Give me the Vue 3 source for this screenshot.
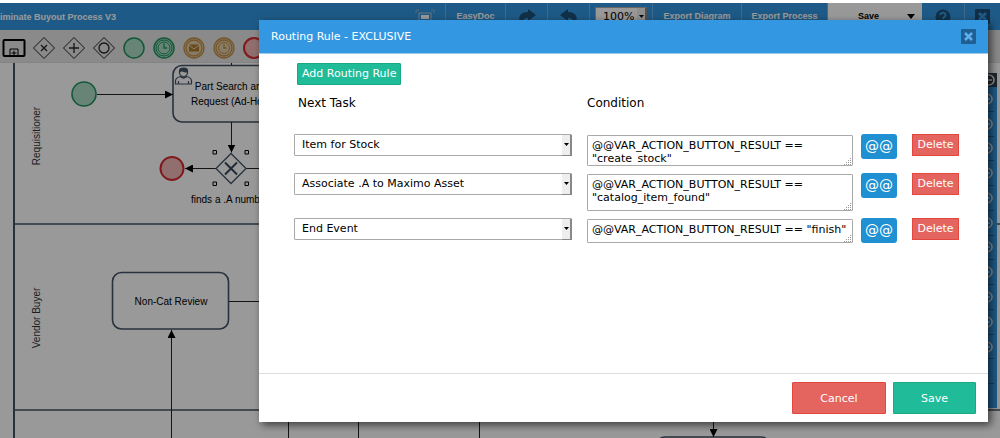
<script setup>
import { ref } from 'vue'

const tasks = ['Item for Stock', 'Associate .A to Maximo Asset', 'End Event']
const rules = ref([
  { id: 1, task: tasks[0], condition: '@@VAR_ACTION_BUTTON_RESULT == "create_stock"', size: 'short' },
  { id: 2, task: tasks[1], condition: '@@VAR_ACTION_BUTTON_RESULT == "catalog_item_found"', size: 'tall' },
  { id: 3, task: tasks[2], condition: '@@VAR_ACTION_BUTTON_RESULT == "finish"', size: 'single' },
])
const zoom = ref('100%')
const shapes = ['Sub process', 'Exclusive gateway', 'Parallel gateway', 'Inclusive gateway', 'Start event', 'Start timer event', 'Intermediate message event', 'Intermediate timer event', 'End event']
</script>

<template>
  <div class="page">
    <div class="designer">
      <header class="topbar">
        <h1 class="process-name">iminate Buyout Process V3</h1>
        <button class="cell fullscreen" type="button" aria-label="Full screen">
          <svg width="20" height="16" viewBox="0 0 20 16" fill="none">
            <path d="M1 4V1H4M16 1H19V4M1 12V15H4M16 15H19V12" stroke="#8fb0cb" />
            <rect x="4" y="4" width="12" height="8" stroke="#b5c9da" />
            <rect x="6" y="6" width="8" height="4" fill="#fff" />
          </svg>
        </button>
        <button class="cell easydoc" type="button">EasyDoc</button>
        <button class="cell arrow" type="button" aria-label="Redo">
          <svg width="18" height="16" viewBox="0 0 18 16"><path d="M10 0L18 6L10 12V9C6 9 4 11 5 16C-1 12 0 3 10 3Z" fill="#1d5078" /></svg>
        </button>
        <button class="cell arrow" type="button" aria-label="Undo">
          <svg width="18" height="16" viewBox="0 0 18 16"><path d="M8 0L0 6L8 12V9C12 9 14 11 13 16C19 12 18 3 8 3Z" fill="#1d5078" /></svg>
        </button>
        <div class="cell zoom-cell">
          <span class="select-box">
            <select v-model="zoom" aria-label="Zoom"><option>100%</option></select>
            <span class="select-arrow"><svg width="5" height="4" viewBox="0 0 5 4"><path d="M0 0H5L2.500 3Z" fill="#000" /></svg></span>
          </span>
        </div>
        <button class="cell diagram-export" type="button">Export Diagram</button>
        <button class="cell process-export" type="button">Export Process</button>
        <button class="save-menu" type="button">
          <span>Save</span>
          <svg width="8" height="5" viewBox="0 0 8 5"><path d="M0 0H8L4 5Z" fill="#000" /></svg>
        </button>
        <button class="cell help" type="button" aria-label="Help">
          <svg width="16" height="16" viewBox="0 0 16 16">
            <circle cx="8" cy="8" r="7.500" fill="#1d5078" />
            <path d="M5.500 6C5.500 3 10.500 3 10.500 6C10.500 8 8 8 8 10M8 11V13" fill="none" stroke="#3397e2" stroke-width="2" />
          </svg>
        </button>
        <button class="cell close-cell" type="button" aria-label="Close designer">
          <svg width="15" height="15" viewBox="0 0 15 15">
            <rect width="15" height="15" rx="1" fill="#1d5078" />
            <path d="M4 4L11 11M11 4L4 11" stroke="#3397e2" stroke-width="3" />
          </svg>
        </button>
      </header>

      <nav class="shapes" aria-label="Shapes">
        <button v-for="(name, i) in shapes" :key="name" type="button" class="shape" :aria-label="name">
          <svg width="24" height="24" viewBox="0 0 24 24" fill="none">
            <template v-if="i === 0">
              <rect x="1.500" y="4" width="21" height="16" rx="1" stroke="#000" stroke-width="2" />
              <path d="M8 20V13H16V20M12 14.500V19M9.500 17H14.500" stroke="#000" />
            </template>
            <template v-else-if="i < 4">
              <path d="M12 1.500L22.500 12L12 22.500L1.500 12Z" stroke="#222" />
              <path v-if="i === 1" d="M9 9L15 15M15 9L9 15" stroke="#222" stroke-width="1.300" />
              <path v-if="i === 2" d="M12 7V17M7 12H17" stroke="#222" stroke-width="1.300" />
              <circle v-if="i === 3" cx="12" cy="12" r="5" stroke="#222" stroke-width="1.300" />
            </template>
            <template v-else-if="i < 6">
              <circle cx="12" cy="12" r="10" fill="#aedcc6" stroke="#219560" stroke-width="1.500" />
              <g v-if="i === 5" stroke="#219560">
                <circle cx="12" cy="12" r="8" /><circle cx="12" cy="12" r="6" />
                <path d="M12 7.500V12H15" stroke-width="1.300" />
              </g>
            </template>
            <template v-else-if="i < 8">
              <circle cx="12" cy="12" r="10" fill="#e3cfae" stroke="#c09045" stroke-width="1.300" />
              <circle cx="12" cy="12" r="8" stroke="#c09045" stroke-width="1.300" />
              <template v-if="i === 6">
                <rect x="7" y="8.500" width="10" height="7" fill="#b07a28" />
                <path d="M7 9L12 13L17 9" stroke="#ead9be" />
              </template>
              <g v-else stroke="#c09045"><circle cx="12" cy="12" r="5.500" /><path d="M12 8V12H14.500" stroke-width="1.300" /></g>
            </template>
            <circle v-else cx="12" cy="12" r="10" fill="#f2b9b9" stroke="#d62a30" stroke-width="2" />
          </svg>
        </button>
      </nav>

      <main class="canvas">
        <svg class="diagram" width="1000" height="375" viewBox="0 63 1000 375" fill="none">
          <defs>
            <marker id="tip" viewBox="0 0 8 8" refX="8" refY="4" markerWidth="8" markerHeight="8" markerUnits="userSpaceOnUse" orient="auto">
              <path d="M0 0L8 4L0 8Z" fill="#000" />
            </marker>
          </defs>
          <g stroke="#445366" stroke-width="1.600">
            <path d="M14 63V438" stroke-width="2" />
            <path d="M14 224H1000M14 410H1000" />
            <rect x="173" y="65.500" width="117" height="56.500" rx="9" />
            <rect x="112.500" y="272.500" width="116" height="56.500" rx="9" />
            <rect x="656" y="437" width="114" height="57" rx="9" />
          </g>
          <g stroke="#222">
            <path d="M97 94.500H173" marker-end="url(#tip)" />
            <path d="M231.500 63V65" />
            <path d="M231.500 122V152.500" marker-end="url(#tip)" />
            <path d="M216 168.500H185" marker-end="url(#tip)" />
            <path d="M246 168.500H300M229 301.500H300" />
            <path d="M171.500 438V330" marker-end="url(#tip)" />
            <path d="M288.500 400V438M358.500 400V438M479.500 400V438" />
            <path d="M713.500 400V437" marker-end="url(#tip)" />
          </g>
          <circle cx="84" cy="94" r="12" fill="#aedcc6" stroke="#219560" stroke-width="1.600" />
          <circle cx="172" cy="168.500" r="11.500" fill="#f2b9b9" stroke="#d62a30" stroke-width="2" />
          <path d="M231 153.500L246 168.500L231 183.500L216 168.500Z" stroke="#445366" stroke-width="1.300" />
          <path d="M225 162.500L237 174.500M237 162.500L225 174.500" stroke="#34475b" stroke-width="2" />
          <path d="M213 150.500H216.500V154H213ZM245 150.500H248.500V154H245ZM213 182H216.500V185.500H213ZM245 182H248.500V185.500H245Z" stroke="#000" />
          <g stroke="#445366" stroke-width="1.200">
            <path d="M175.500 84V80.500Q176 77.500 180.500 76.500Q183.500 79.500 186.500 76.500Q191 77.500 191.500 80.500V84ZM178.500 84V81M188.500 84V81" />
            <circle cx="183.500" cy="72.500" r="4" />
            <path d="M179.500 72Q179 68 183.500 68Q188 68 187.500 72Q183 72 182 70.500Z" fill="#445366" />
          </g>
          <g class="label" text-anchor="middle">
            <text x="231" y="90">Part Search and</text>
            <text x="231" y="105">Request (Ad-Hoc)</text>
            <text x="171" y="305">Non-Cat Review</text>
          </g>
          <text class="label" x="191" y="203">finds a .A number</text>
          <text class="lane" text-anchor="middle" transform="translate(40 136) rotate(-90)">Requisitioner</text>
          <text class="lane" text-anchor="middle" transform="translate(40 318) rotate(-90)">Vendor Buyer</text>
        </svg>
        <aside class="side-panel">
          <div class="side-head"><svg width="12" height="12" viewBox="0 0 12 12" fill="none" stroke="#fff" stroke-width="1.500"><circle cx="6" cy="6" r="5" /><path d="M3 6H9" /></svg></div>
          <div v-for="n in 13" :key="n" class="side-item">
            <svg v-if="n < 12" width="12" height="12" viewBox="0 0 12 12" fill="none" stroke="#eee" stroke-width="1.500"><circle cx="6" cy="6" r="5" /><path d="M3 6H9M6 3V9" /></svg>
          </div>
        </aside>
      </main>

      <div class="backdrop">
        <section class="dialog" role="dialog" aria-labelledby="dialog-title">
          <header class="dialog-head">
            <h2 id="dialog-title">Routing Rule - EXCLUSIVE</h2>
            <button class="dialog-close" type="button" aria-label="Close">
              <svg width="15" height="15" viewBox="0 0 15 15">
                <rect width="15" height="15" rx="1" fill="#1f5f94" />
                <path d="M4 4L11 11M11 4L4 11" stroke="#5db0ef" stroke-width="2.500" />
              </svg>
            </button>
          </header>
          <div class="dialog-body">
            <button class="add" type="button">Add Routing Rule</button>
            <div class="rule-grid headings">
              <span id="task-heading">Next Task</span>
              <span id="condition-heading" class="condition-heading">Condition</span>
            </div>
            <div class="rules">
              <div v-for="rule in rules" :key="rule.id" class="rule-grid">
                <span class="select-box task">
                  <select v-model="rule.task" aria-labelledby="task-heading">
                    <option v-for="task in tasks" :key="task">{{ task }}</option>
                  </select>
                  <span class="select-arrow"><svg width="5" height="4" viewBox="0 0 5 4"><path d="M0 0H5L2.500 3Z" fill="#000" /></svg></span>
                </span>
                <div class="condition" :class="rule.size">
                  <textarea v-model="rule.condition" aria-labelledby="condition-heading" spellcheck="false"></textarea>
                  <svg class="grip" width="8" height="8" viewBox="0 0 8 8" stroke="#999" stroke-dasharray="1 1">
                    <path d="M6 1.500H8M4 3.500H8M2 5.500H8M0 7.500H8" />
                  </svg>
                </div>
                <button class="variable" type="button">@@</button>
                <button class="delete" type="button">Delete</button>
              </div>
            </div>
          </div>
          <footer class="dialog-foot">
            <button class="cancel" type="button">Cancel</button>
            <button class="save" type="button">Save</button>
          </footer>
        </section>
      </div>
    </div>
  </div>
</template>

<style>
body {
  margin: 0;
  background: #fff;
}
</style>

<style scoped>
* {
  box-sizing: border-box;
}
.page {
  padding-top: 3px;
  font-family: "DejaVu Sans", sans-serif;
}
button {
  margin: 0;
  padding: 0;
  border: 0;
  background: none;
  font: inherit;
  color: inherit;
  cursor: pointer;
}
svg {
  display: block;
}
.designer {
  position: relative;
  overflow: hidden;
  display: flex;
  flex-direction: column;
  min-height: calc(100vh - 3px);
  background: #fff;
}
.topbar {
  display: flex;
  height: 27px;
  background: #3397e2;
  color: #fff;
  font: bold 9px/27px "Liberation Sans", sans-serif;
}
.process-name {
  flex: 1;
  margin: 0;
  font-size: 9px;
  line-height: 29px;
  white-space: nowrap;
}
.cell {
  display: flex;
  align-items: center;
  justify-content: center;
  border-right: 1px solid #6ab2ea;
}
.cell,
.save-menu {
  flex: none;
  line-height: 29px;
}
.fullscreen {
  width: 41px;
}
.easydoc {
  width: 60px;
}
.arrow {
  width: 42px;
}
.zoom-cell {
  width: 63px;
}
.diagram-export {
  width: 89px;
}
.process-export {
  width: 86px;
}
.save-menu {
  display: flex;
  align-items: center;
  justify-content: space-between;
  width: 94px;
  padding: 0 7px 0 30px;
  background: #fff;
  color: #000;
}
.help {
  width: 43px;
}
.close-cell {
  width: 35px;
  border: 0;
}
.shapes {
  display: flex;
  align-items: center;
  gap: 6px;
  height: 33px;
  padding: 3px 0 0 2px;
  background: #e6e6e6;
  border-bottom: 1px solid #ddd;
}
.shape {
  flex: none;
  width: 24px;
}
.canvas {
  position: relative;
  flex: 1;
}
.label {
  fill: #000;
  font: 10px "Liberation Sans", sans-serif;
}
.lane {
  fill: #333;
  font: 10px "Liberation Sans", sans-serif;
}
.side-panel {
  position: absolute;
  top: 10px;
  right: 3px;
  display: flex;
  flex-direction: column;
  width: 120px;
  height: 335px;
  padding: 0 3px;
  background: #3397e2;
}
.side-head {
  display: flex;
  align-items: center;
  justify-content: flex-end;
  height: 14px;
  margin: 0 -3px;
  padding-right: 2px;
  background: #35404e;
}
.side-item {
  display: flex;
  flex: 1;
  align-items: center;
  justify-content: flex-end;
  padding-right: 1px;
  border-bottom: 1px solid #26689b;
}
.side-item:last-child {
  border: 0;
}
.backdrop {
  position: absolute;
  inset: 0;
  padding: 17px 12px 16px 259px;
  background: rgba(0, 0, 0, 0.4);
}
.dialog {
  display: flex;
  flex-direction: column;
  background: #fff;
  box-shadow: 3px 3px 8px rgba(0, 0, 0, 0.6);
}
.dialog-head {
  display: flex;
  align-items: center;
  justify-content: space-between;
  height: 34px;
  padding: 0 12px;
  background: #3397e2;
  border-bottom: 1px solid #9dcbee;
  color: #fff;
}
.dialog-head h2 {
  margin: 0;
  font-size: 11px;
  font-weight: normal;
}
.dialog-body {
  min-height: 319px;
  padding: 8px 29px 0 35px;
}
.add {
  height: 22px;
  margin-left: 3px;
  padding: 0 4px;
  border: 1px solid #1aa883;
  border-radius: 1px;
  background: #20bc99;
  color: #fff;
  font-size: 11px;
}
.rule-grid {
  display: grid;
  grid-template-columns: 278fr 15px 266fr 8px 36px 15px 47px;
  align-items: start;
}
.headings {
  padding-top: 9px;
  font-size: 12px;
  line-height: 18px;
  color: #000;
}
.headings span:first-child {
  padding-left: 4px;
}
.condition-heading {
  grid-column: 3;
}
.rules {
  display: flex;
  flex-direction: column;
  gap: 7px;
  padding-top: 22px;
}
.select-box {
  position: relative;
  display: block;
}
.select-box select {
  appearance: none;
  display: block;
  width: 100%;
  height: 22px;
  margin: 0;
  padding: 0 7px;
  border: 1px solid #aaa;
  border-radius: 1px;
  background: #fff;
  color: #000;
  font: 11px "DejaVu Sans", sans-serif;
}
.zoom-cell .select-box {
  width: 52px;
}
.zoom-cell select {
  height: 20px;
}
.select-arrow {
  position: absolute;
  top: 1px;
  right: 0;
  bottom: 0;
  display: flex;
  align-items: center;
  justify-content: center;
  width: 10px;
  background: #eee;
  border-right: 2px solid #888;
  border-bottom: 1px solid #888;
  pointer-events: none;
}
.condition {
  position: relative;
  grid-column: 3;
  margin-top: 1px;
  padding: 3px 0 1px;
  border: 1px solid #aaa;
  border-radius: 1px;
  background: #fff;
}
.short {
  height: 31px;
}
.tall {
  height: 37px;
}
.single {
  height: 24px;
}
.condition textarea {
  display: block;
  width: 100%;
  height: 100%;
  padding: 0 0 0 4px;
  border: 0;
  outline: 0;
  background: transparent;
  color: #000;
  font: 11px/13px "DejaVu Sans", sans-serif;
  resize: none;
  overflow: hidden;
}
.grip {
  position: absolute;
  right: 0;
  bottom: 0;
}
.variable {
  grid-column: 5;
  height: 25px;
  border-radius: 3px;
  background: #1f90d2;
  color: #fff;
  font-size: 14px;
  line-height: 25px;
}
.delete {
  grid-column: 7;
  height: 22px;
  border: 1px solid #e4473e;
  background: #e4655f;
  color: #fff;
  font-size: 11px;
}
.dialog-foot {
  display: flex;
  justify-content: flex-end;
  gap: 7px;
  padding: 8px 12px;
  border-top: 1px solid #ddd;
}
.dialog-foot button {
  height: 32px;
  color: #fff;
  font-size: 11px;
  border-radius: 1px;
}
.dialog-foot .cancel {
  width: 94px;
  border: 1px solid #e4473e;
  background: #e4655f;
}
.dialog-foot .save {
  width: 83px;
  border: 1px solid #1aa883;
  background: #20bc99;
}
</style>
